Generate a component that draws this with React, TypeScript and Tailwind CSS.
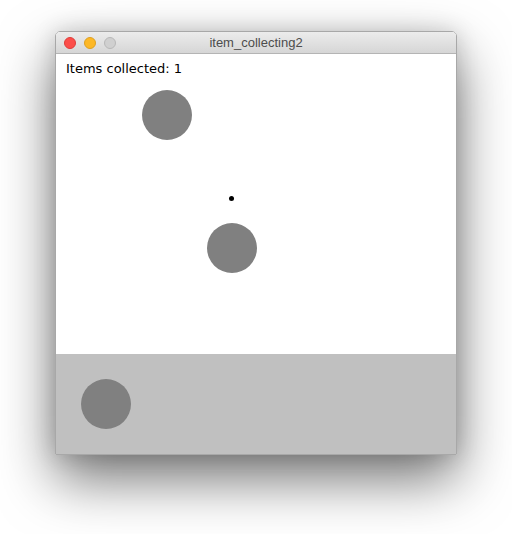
export default function App() {
  return (
    <div className="w-[512px] h-[534px] bg-white pt-[31px] pl-[55px]">
      <div className="w-[402px] rounded-t-[5px] border border-[#a8a8a8] shadow-[0_24px_55px_rgba(0,0,0,0.55),0_0_22px_rgba(0,0,0,0.15)] overflow-hidden">
        <div className="relative h-[22px] bg-gradient-to-b from-[#ececec] to-[#d6d6d6] border-b border-[#b4b4b4] flex items-center justify-center">
          <div className="absolute left-[8px] top-[5px] flex gap-[8px]">
            <div className="w-[12px] h-[12px] rounded-full bg-[#fc4e4a] border border-[#df3d39]" />
            <div className="w-[12px] h-[12px] rounded-full bg-[#fdb826] border border-[#dea021]" />
            <div className="w-[12px] h-[12px] rounded-full bg-[#d0d0d0] border border-[#b8b8b8]" />
          </div>
          <span className="text-[13px] text-[#4d4d4d] leading-none" style={{ fontFamily: '"Liberation Sans", Arial, sans-serif' }}>
            item_collecting2
          </span>
        </div>
        <div className="relative w-[400px] h-[400px] flex flex-col bg-white">
          <div className="h-[300px] pl-[10px] pt-[7px]">
            <div className="text-[13px] leading-[16px] text-black" style={{ fontFamily: '"DejaVu Sans", sans-serif' }}>
              Items collected: 1
            </div>
          </div>
          <div className="h-[100px] bg-[#c0c0c0]" />
          <div className="absolute left-[86px] top-[36px] w-[50px] h-[50px] rounded-full bg-[#808080]" />
          <div className="absolute left-[173px] top-[142px] w-[5px] h-[5px] rounded-full bg-black" />
          <div className="absolute left-[151px] top-[169px] w-[50px] h-[50px] rounded-full bg-[#808080]" />
          <div className="absolute left-[25px] top-[325px] w-[50px] h-[50px] rounded-full bg-[#808080]" />
        </div>
      </div>
    </div>
  );
}
